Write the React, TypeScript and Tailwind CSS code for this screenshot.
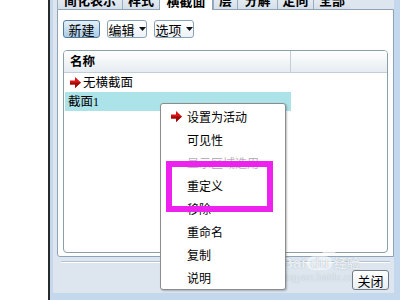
import React from "react";

const cjk = "font-['Noto_Sans_CJK_SC','Noto_Sans',sans-serif]";

const tabs = [
  { label: "简化表示", w: "w-[65px]" },
  { label: "样式", w: "w-[37px]" },
  { label: "横截面", w: "w-[54px]", active: true },
  { label: "层", w: "w-[24px]" },
  { label: "分解", w: "w-[40px]" },
  { label: "定向", w: "w-[36px]" },
  { label: "全部", w: "w-[37px]" },
];

const menuItems = [
  { label: "设置为活动", arrow: true },
  { label: "可见性" },
  { label: "显示区域选用", disabled: true },
  { label: "重定义" },
  { label: "移除" },
  { label: "重命名" },
  { label: "复制" },
  { label: "说明" },
];

const RedArrow = () => (
  <svg width="11" height="11" viewBox="0 0 11 11">
    <polygon points="0,3.5 5,3.5 5,0 11,5.5 5,11 5,7.5 0,7.5" fill="#d81414" />
    <polygon points="5,7.5 0,7.5 0,5.5 11,5.5 5,11" fill="#9c0a0a" />
  </svg>
);

const Caret = () => (
  <svg width="7" height="4" viewBox="0 0 7 4" className="ml-[4px]">
    <polygon points="0,0 7,0 3.5,4" fill="#111" />
  </svg>
);

export default function App() {
  return (
    <div className={`relative w-[400px] h-[300px] overflow-hidden bg-white flex ${cjk}`}>
      {/* watermark, sits under the close button */}
      <div className="absolute left-[282px] top-[244px] flex flex-col pointer-events-none">
        <div className="ml-[40px] w-[14px] h-[12px] rounded-full bg-white/60" />
        <div className="flex items-center gap-[2px] text-white/80 text-[15px] font-bold leading-[14px] font-['Liberation_Sans',sans-serif] [text-shadow:0_0_1px_#8fa2b5]">
          <span>Bai</span>
          <span className="px-[3px] rounded-full bg-white/50">du</span>
          <span className={`${cjk} text-[13px]`}>经验</span>
        </div>
        <div className="mt-[3px] text-[10px] leading-[10px] text-white/70 font-['Liberation_Sans',sans-serif] [text-shadow:0_0_1px_#9aabbc]">
          jingyan.baidu.com
        </div>
      </div>

      <div className="w-[48px] bg-white" />
      <div className="w-[2px] bg-[#2a2a2a]" />
      <div className="flex-1 flex flex-col bg-[#c3d7ed] pl-[3px] pr-[6px] pb-[7px]">
        <div className="flex-1 flex flex-col bg-[#dde6ef] pl-[4px]">
          {/* tabs */}
          <div className="flex -mt-[11px] relative z-10">
            {tabs.map((t) =>
              t.active ? (
                <div
                  key={t.label}
                  className={`${t.w} h-[21px] -mb-px bg-white border-x border-t border-[#8ea3b7] flex items-end justify-center pb-[2px] text-[13px] leading-[14px] font-bold text-black`}
                >
                  {t.label}
                </div>
              ) : (
                <div
                  key={t.label}
                  className={`${t.w} h-[20px] bg-gradient-to-b from-[#f1f4f8] to-[#d6e0ea] border-l border-t border-[#9aadc0] flex items-end justify-center pb-[2px] text-[13px] leading-[14px] font-bold text-black`}
                >
                  {t.label}
                </div>
              )
            )}
          </div>
          {/* panel */}
          <div className="h-[248px] bg-white border border-[#8ea3b7] rounded-bl-[3px] flex flex-col px-[5px] pt-[10px] pb-[3px]">
            <div className="flex gap-[7px] h-[18px]">
              <div className="w-[37px] h-[18px] rounded-[3px] border border-[#52799b] bg-gradient-to-b from-[#e4f0fa] to-[#aacbe6] flex items-center justify-center text-[13px] leading-none text-black">
                新建
              </div>
              <div className="w-[40px] h-[18px] rounded-[3px] border border-[#8aa2b8] bg-gradient-to-b from-white to-[#edf2f6] flex items-center justify-center text-[13px] leading-none text-black">
                编辑
                <Caret />
              </div>
              <div className="w-[40px] h-[18px] rounded-[3px] border border-[#8aa2b8] bg-gradient-to-b from-white to-[#edf2f6] flex items-center justify-center text-[13px] leading-none text-black">
                选项
                <Caret />
              </div>
            </div>
            <div className="mt-[12px] flex-1 rounded-[4px] border border-[#8a9fa8] flex flex-col overflow-hidden">
              <div className="h-[22px] flex bg-gradient-to-b from-white to-[#e6ecf1] border-b border-[#c2ced6]">
                <div className="w-[227px] border-r border-[#c2ced6] pl-[6px] flex items-center text-[12.5px] font-bold text-black">
                  名称
                </div>
                <div className="flex-1" />
              </div>
              <div className="h-[19px] flex items-center pl-[6px] gap-[2px] text-[12.5px] text-black">
                <RedArrow />
                <span>无横截面</span>
              </div>
              <div className="px-[1px]">
                <div className="w-[226px] h-[19px] bg-[#ace3e9] flex items-center pl-[3px] text-[12.5px] text-black">
                  截面<span className="font-['Liberation_Serif',serif] text-[12px]">1</span>
                </div>
              </div>
            </div>
          </div>
          {/* bottom area */}
          <div className="flex-1 flex flex-col">
            <div className="mt-[4px] ml-[4px] mr-[4px] h-[2px] border-t border-[#b3c2d0] bg-white" />
            <div className="flex justify-end pr-[5px] mt-[7px]">
              <div className="relative w-[37px] h-[20px] rounded-[3px] border border-[#707a84] bg-gradient-to-b from-white to-[#e8eef3] flex items-center justify-center text-[13px] leading-none text-black">
                关闭
              </div>
            </div>
          </div>
        </div>
      </div>

      {/* context menu */}
      <div className="absolute left-[160px] top-[103px] w-[126px] h-[187px] bg-white border border-[#8c8c8c] rounded-[3px] shadow-[1px_1px_2px_rgba(0,0,0,0.25)] py-[1px]">
        {menuItems.map((m) => (
          <div key={m.label} className="h-[23px] flex items-center">
            <div className="w-[26px] flex justify-center pl-[4px]">{m.arrow && <RedArrow />}</div>
            <span className={`text-[12px] ${m.disabled ? "text-[#b4b4b4]" : "text-black"}`}>{m.label}</span>
          </div>
        ))}
      </div>

      {/* highlight box */}
      <div className="absolute left-[166px] top-[161px] w-[107px] h-[51px] border-[6px] border-[#ee22ee]" />
    </div>
  );
}
